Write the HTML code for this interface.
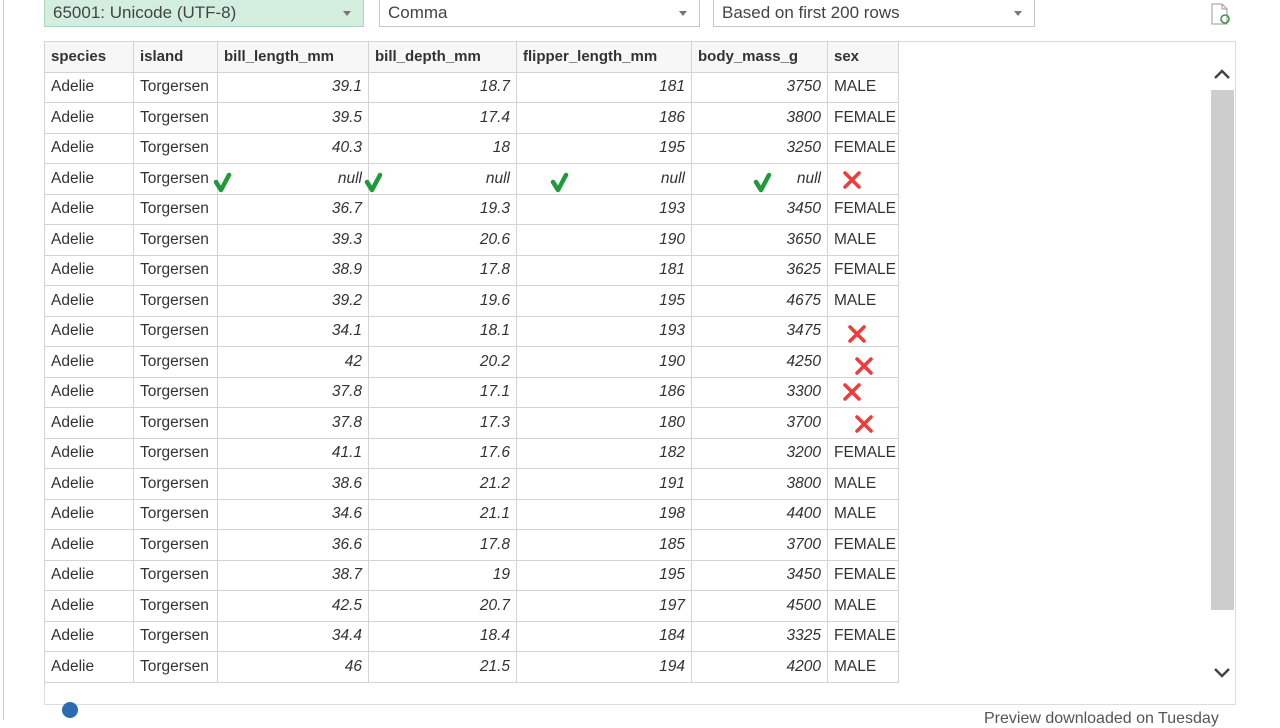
<!DOCTYPE html><html><head><style>
body{margin:0;width:1280px;height:720px;background:#fff;position:relative;overflow:hidden;font-family:"Liberation Sans",sans-serif;color:#333}
.dd{position:absolute;top:0;height:27px;border:1px solid #c6c6c6;border-top:none;box-sizing:border-box;font-size:17px;line-height:26px;padding-left:8px;color:#444}
.dd:after{content:"";position:absolute;right:12px;top:11px;border:4px solid transparent;border-top:5px solid #777}
#panel{position:absolute;left:44px;top:41px;width:1192px;height:664px;border:1px solid #dcdcdc;box-sizing:border-box}
table{position:absolute;left:44px;top:41px;border-collapse:collapse;font-size:15.5px;table-layout:fixed;width:854px}
td{border:1px solid #d4d4d4;height:30.5px;padding:0 6px;white-space:nowrap;box-sizing:border-box;overflow:hidden}
tr:first-child td{font-weight:bold;background:#f7f7f7;font-size:15px}
td.n{text-align:right;font-style:italic}
.mk{position:absolute}
</style></head><body>
<div style="position:absolute;left:3px;top:0;width:1px;height:720px;background:#d0d0d0"></div>
<div class="dd" style="left:44px;width:320px;background:#d3eedf;border-color:#a9d6bc">65001: Unicode (UTF-8)</div>
<div class="dd" style="left:379px;width:321px">Comma</div>
<div class="dd" style="left:713px;width:322px">Based on first 200 rows</div>
<svg style="position:absolute;left:1210px;top:3px" width="22" height="22"><path d="M2 1h10l5 5v15H2z" fill="#fff" stroke="#999"/><path d="M12 1v5h5" fill="none" stroke="#999"/><circle cx="15" cy="16" r="4" fill="none" stroke="#3a9a4a" stroke-width="1.6"/></svg>
<div id="panel"></div>
<table>
<colgroup><col style="width:89px"><col style="width:84px"><col style="width:151px"><col style="width:148px"><col style="width:175px"><col style="width:136px"><col style="width:71px"></colgroup>
<tr><td>species</td><td>island</td><td>bill_length_mm</td><td>bill_depth_mm</td><td>flipper_length_mm</td><td>body_mass_g</td><td>sex</td></tr>
<tr><td>Adelie</td><td>Torgersen</td><td class="n">39.1</td><td class="n">18.7</td><td class="n">181</td><td class="n">3750</td><td>MALE</td></tr>
<tr><td>Adelie</td><td>Torgersen</td><td class="n">39.5</td><td class="n">17.4</td><td class="n">186</td><td class="n">3800</td><td>FEMALE</td></tr>
<tr><td>Adelie</td><td>Torgersen</td><td class="n">40.3</td><td class="n">18</td><td class="n">195</td><td class="n">3250</td><td>FEMALE</td></tr>
<tr><td>Adelie</td><td>Torgersen</td><td class="n">null</td><td class="n">null</td><td class="n">null</td><td class="n">null</td><td></td></tr>
<tr><td>Adelie</td><td>Torgersen</td><td class="n">36.7</td><td class="n">19.3</td><td class="n">193</td><td class="n">3450</td><td>FEMALE</td></tr>
<tr><td>Adelie</td><td>Torgersen</td><td class="n">39.3</td><td class="n">20.6</td><td class="n">190</td><td class="n">3650</td><td>MALE</td></tr>
<tr><td>Adelie</td><td>Torgersen</td><td class="n">38.9</td><td class="n">17.8</td><td class="n">181</td><td class="n">3625</td><td>FEMALE</td></tr>
<tr><td>Adelie</td><td>Torgersen</td><td class="n">39.2</td><td class="n">19.6</td><td class="n">195</td><td class="n">4675</td><td>MALE</td></tr>
<tr><td>Adelie</td><td>Torgersen</td><td class="n">34.1</td><td class="n">18.1</td><td class="n">193</td><td class="n">3475</td><td></td></tr>
<tr><td>Adelie</td><td>Torgersen</td><td class="n">42</td><td class="n">20.2</td><td class="n">190</td><td class="n">4250</td><td></td></tr>
<tr><td>Adelie</td><td>Torgersen</td><td class="n">37.8</td><td class="n">17.1</td><td class="n">186</td><td class="n">3300</td><td></td></tr>
<tr><td>Adelie</td><td>Torgersen</td><td class="n">37.8</td><td class="n">17.3</td><td class="n">180</td><td class="n">3700</td><td></td></tr>
<tr><td>Adelie</td><td>Torgersen</td><td class="n">41.1</td><td class="n">17.6</td><td class="n">182</td><td class="n">3200</td><td>FEMALE</td></tr>
<tr><td>Adelie</td><td>Torgersen</td><td class="n">38.6</td><td class="n">21.2</td><td class="n">191</td><td class="n">3800</td><td>MALE</td></tr>
<tr><td>Adelie</td><td>Torgersen</td><td class="n">34.6</td><td class="n">21.1</td><td class="n">198</td><td class="n">4400</td><td>MALE</td></tr>
<tr><td>Adelie</td><td>Torgersen</td><td class="n">36.6</td><td class="n">17.8</td><td class="n">185</td><td class="n">3700</td><td>FEMALE</td></tr>
<tr><td>Adelie</td><td>Torgersen</td><td class="n">38.7</td><td class="n">19</td><td class="n">195</td><td class="n">3450</td><td>FEMALE</td></tr>
<tr><td>Adelie</td><td>Torgersen</td><td class="n">42.5</td><td class="n">20.7</td><td class="n">197</td><td class="n">4500</td><td>MALE</td></tr>
<tr><td>Adelie</td><td>Torgersen</td><td class="n">34.4</td><td class="n">18.4</td><td class="n">184</td><td class="n">3325</td><td>FEMALE</td></tr>
<tr><td>Adelie</td><td>Torgersen</td><td class="n">46</td><td class="n">21.5</td><td class="n">194</td><td class="n">4200</td><td>MALE</td></tr>
</table>
<svg class="mk" style="left:0;top:0" width="1280" height="720">
<g fill="none" stroke="#1f9a3a" stroke-width="4.5" stroke-linecap="round" stroke-linejoin="round">
<path d="M216 182l5 8 8-15"/><path d="M367 182l5 8 8-15"/><path d="M553 182l5 8 8-15"/><path d="M756 182l5 8 8-15"/></g>
<g stroke="#ee3b3b" stroke-width="3.5" stroke-linecap="round">
<path d="M845 173l14 14M859 173l-14 14"/><path d="M850 327l14 14M864 327l-14 14"/><path d="M857 359l14 14M871 359l-14 14"/><path d="M845 385l14 14M859 385l-14 14"/><path d="M857 417l14 14M871 417l-14 14"/></g>
<rect x="1211" y="90" width="23" height="520" fill="#cdcdcd"/>
<path d="M1215 78l7-7 7 7" fill="none" stroke="#444" stroke-width="2.5"/>
<path d="M1215 669l7 7 7-7" fill="none" stroke="#444" stroke-width="2.5"/>
<circle cx="70" cy="710" r="8" fill="#2a6bb3"/>
</svg>
<div style="position:absolute;left:984px;top:710px;font-size:16px;color:#555">Preview downloaded on Tuesday</div>
</body></html>
